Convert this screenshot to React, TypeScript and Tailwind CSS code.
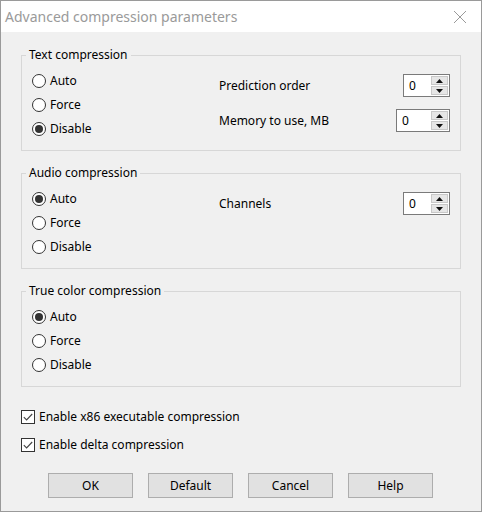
import React from "react";

function Radio({ label, checked }: { label: string; checked?: boolean }) {
  return (
    <div className="flex items-center h-[24px] pt-[1px]">
      <span className="w-[14px] h-[14px] rounded-full border border-[#333333] bg-white flex items-center justify-center shrink-0">
        {checked && <span className="w-[8px] h-[8px] rounded-full bg-[#333333]" />}
      </span>
      <span className="ml-[4px]">{label}</span>
    </div>
  );
}

function Spinner({ width }: { width: string }) {
  return (
    <div className={`flex h-[23px] border border-[#7a7a7a] bg-white ${width}`}>
      <div className="flex-1 pl-[5px] flex items-center">0</div>
      <div className="w-[19px] flex flex-col p-[1px] gap-[1px]">
        <div className="flex-1 bg-[#e6e6e6] border border-[#c8c8c8] flex items-center justify-center">
          <svg width="7" height="4" viewBox="0 0 7 4">
            <path d="M0 4 L3.5 0 L7 4 Z" fill="#111" />
          </svg>
        </div>
        <div className="flex-1 bg-[#e6e6e6] border border-[#c8c8c8] flex items-center justify-center">
          <svg width="7" height="4" viewBox="0 0 7 4">
            <path d="M0 0 L3.5 4 L7 0 Z" fill="#111" />
          </svg>
        </div>
      </div>
    </div>
  );
}

function Group({ title, className, children }: { title: string; className: string; children: React.ReactNode }) {
  return (
    <fieldset className={`mx-[20px] border border-[#d7d7d7] ${className}`}>
      <legend className="ml-[4px] px-[3px] leading-[16px]">{title}</legend>
      {children}
    </fieldset>
  );
}

function Check({ label, className }: { label: string; className: string }) {
  return (
    <div className={`flex items-center h-[20px] pl-[20px] ${className}`}>
      <span className="w-[14px] h-[14px] border border-[#333333] bg-white flex items-center justify-center">
        <svg width="10" height="8" viewBox="0 0 10 8">
          <path d="M0.8 4.2 L3.6 7 L9.2 1" fill="none" stroke="#444" strokeWidth="1.1" />
        </svg>
      </span>
      <span className="ml-[4px]">{label}</span>
    </div>
  );
}

function Btn({ label }: { label: string }) {
  return (
    <div className="w-[85px] h-[25px] bg-[#e1e1e1] border border-[#adadad] flex items-center justify-center">
      {label}
    </div>
  );
}

export default function App() {
  return (
    <div className="w-[482px] h-[515px] bg-white font-['Noto_Sans',sans-serif] text-[12px] text-black">
      <div className="w-[482px] h-[512px] border border-[#9a9a9a] flex flex-col bg-[#f0f0f0]">
        <div className="h-[31px] bg-white flex items-center justify-between pl-[4px] pr-[14px] shrink-0">
          <span className="text-[14px] text-[#9a9a9a]">Advanced compression parameters</span>
          <svg width="14" height="14" viewBox="0 0 14 14">
            <path d="M1 1 L13 13 M13 1 L1 13" stroke="#9a9a9a" strokeWidth="1" />
          </svg>
        </div>

        <Group title="Text compression" className="mt-[15px]">
          <div className="flex pl-[10px] pr-[10px] pb-[10px]">
            <div className="w-[187px] pt-[5px]">
              <Radio label="Auto" />
              <Radio label="Force" />
              <Radio label="Disable" checked />
            </div>
            <div className="flex-1 pt-[11px] flex flex-col gap-[12px]">
              <div className="flex items-center justify-between h-[23px]">
                <span>Prediction order</span>
                <Spinner width="w-[47px]" />
              </div>
              <div className="flex items-center justify-between h-[23px]">
                <span>Memory to use, MB</span>
                <Spinner width="w-[54px]" />
              </div>
            </div>
          </div>
        </Group>

        <Group title="Audio compression" className="mt-[14px]">
          <div className="flex pl-[10px] pr-[10px] pb-[10px]">
            <div className="w-[187px] pt-[5px]">
              <Radio label="Auto" checked />
              <Radio label="Force" />
              <Radio label="Disable" />
            </div>
            <div className="flex-1 pt-[11px]">
              <div className="flex items-center justify-between h-[23px]">
                <span>Channels</span>
                <Spinner width="w-[47px]" />
              </div>
            </div>
          </div>
        </Group>

        <Group title="True color compression" className="mt-[14px]">
          <div className="pl-[10px] pt-[5px] pb-[10px]">
            <Radio label="Auto" checked />
            <Radio label="Force" />
            <Radio label="Disable" />
          </div>
        </Group>

        <Check label="Enable x86 executable compression" className="mt-[20px]" />
        <Check label="Enable delta compression" className="mt-[8px]" />

        <div className="flex gap-[15px] pl-[47px] mt-[18px]">
          <Btn label="OK" />
          <Btn label="Default" />
          <Btn label="Cancel" />
          <Btn label="Help" />
        </div>
      </div>
    </div>
  );
}
